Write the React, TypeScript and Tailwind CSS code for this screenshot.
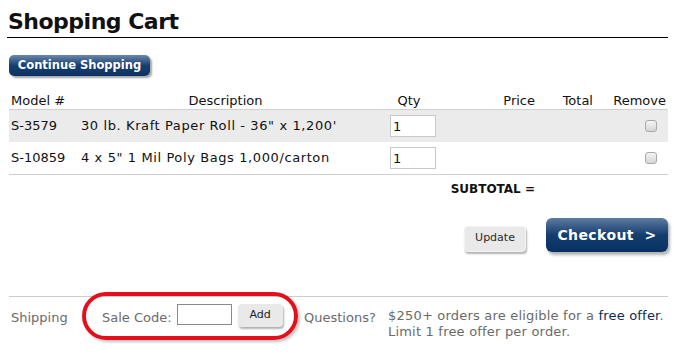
import React from 'react';

const font = { fontFamily: '"DejaVu Sans", sans-serif' };

const rows = [
  { model: 'S-3579', desc: '30 lb. Kraft Paper Roll - 36" x 1,200\'', shaded: true },
  { model: 'S-10859', desc: '4 x 5" 1 Mil Poly Bags 1,000/carton', shaded: false },
];

const App: React.FC = () => {
  return (
    <div className="w-[684px] h-[356px] bg-white relative overflow-hidden text-[#111]" style={font}>
      <div className="pl-[7px] pt-[7px] w-[668px]">
        <h1 className="text-[22px] font-bold leading-[30px] pl-[1px] border-b border-black tracking-[-0.5px]">Shopping Cart</h1>

        <button className="mt-[17px] ml-[2px] h-[21px] w-[141px] rounded-[5px] bg-gradient-to-b from-[#6a88ad] via-[#183f6f] to-[#0b3263] text-white text-[11.5px] font-bold leading-[21px] shadow-[2px_2px_2px_rgba(0,0,0,0.35)]">
          Continue Shopping
        </button>

        {/* cart table */}
        <div className="mt-[17px] ml-[2px] w-[659px] text-[13px]">
          <div className="flex h-[17px] items-end leading-[17px] border-b border-[#cfcfcf]">
            <div className="w-[70px] pl-[2px]">Model #</div>
            <div className="w-[293px] text-center">Description</div>
            <div className="w-[74px] text-center">Qty</div>
            <div className="w-[94px] text-right pr-[5px]">Price</div>
            <div className="w-[60px] text-right pr-[7px]">Total</div>
            <div className="w-[68px] text-right pr-[2px]">Remove</div>
          </div>
          {rows.map((r, i) => (
            <div
              key={r.model}
              className={`flex items-center h-[32px] ${r.shaded ? 'bg-[#ebebeb]' : 'bg-white'} ${i === rows.length - 1 ? 'border-b border-[#cfcfcf] h-[33px]' : ''}`}
            >
              <div className="w-[70px] pl-[2px]">{r.model}</div>
              <div className="w-[293px] pl-[2px] whitespace-nowrap tracking-[0.6px]">{r.desc}</div>
              <div className="w-[74px] pl-[18px]">
                <input
                  defaultValue="1"
                  className="w-[46px] h-[22px] bg-white border border-[#c8c8c8] px-[2px] text-[13px] outline-none"
                  style={font}
                />
              </div>
              <div className="w-[94px]"></div>
              <div className="w-[60px]"></div>
              <div className="w-[68px] flex justify-end pr-[11px]">
                <span className="w-[12px] h-[12px] rounded-[3px] border border-[#a9a9a9] bg-gradient-to-b from-[#f4f4f4] to-[#d6d6d6]"></span>
              </div>
            </div>
          ))}
          <div className="flex h-[24px] items-center pt-[4px]">
            <div className="w-[437px]"></div>
            <div className="w-[94px] text-right pr-[5px] text-[12px] font-bold whitespace-nowrap">SUBTOTAL =</div>
          </div>
        </div>

        <div className="mt-[19px] flex justify-end items-center gap-[20px] w-[661px]">
          <button className="mt-[7px] w-[62px] h-[26px] rounded-[4px] bg-[#e9e9e9] text-[11px] text-[#2a2a2a] shadow-[1px_2px_2px_rgba(0,0,0,0.3)] border border-[#f3f3f3]">
            Update
          </button>
          <button className="w-[122px] h-[34px] rounded-[6px] bg-gradient-to-b from-[#5c7ca3] via-[#153d6d] to-[#073163] text-white text-[14px] font-bold shadow-[2px_3px_3px_rgba(0,0,0,0.3)] tracking-[0.4px]">
            Checkout&nbsp;&nbsp;&gt;
          </button>
        </div>

        {/* footer */}
        <div className="mt-[44px] ml-[2px] w-[659px] border-t border-[#cccccc] pt-[7px] flex text-[13px] text-[#6a6a6a]">
          <div className="w-[91px] pl-[2px] pt-[4px]">Shipping</div>
          <div className="w-[202px] flex items-start gap-[5px] pl-[2px]">
            <span className="pt-[4px]">Sale Code:</span>
            <input className="w-[55px] h-[21px] border border-[#8a8a8a] bg-white" />
            <button className="ml-[1px] w-[45px] h-[23px] rounded-[4px] bg-[#e9e9e9] text-[11px] text-[#222] shadow-[1px_2px_2px_rgba(0,0,0,0.3)]">
              Add
            </button>
          </div>
          <div className="w-[86px] pl-[2px] pt-[4px]">Questions?</div>
          <div className="pt-[4px] leading-[16px] tracking-[0.2px]">
            <div>
              $250+ orders are eligible for a <span className="text-[#0d2a55]">free offer</span>.
            </div>
            <div>Limit 1 free offer per order.</div>
          </div>
        </div>
      </div>

      {/* annotation oval */}
      <div className="absolute left-[82px] top-[292px] w-[216px] h-[48px] rounded-full border-[4px] border-[#e3101c] shadow-[2px_2px_3px_rgba(0,0,0,0.25)]"></div>
    </div>
  );
};

export default App;
